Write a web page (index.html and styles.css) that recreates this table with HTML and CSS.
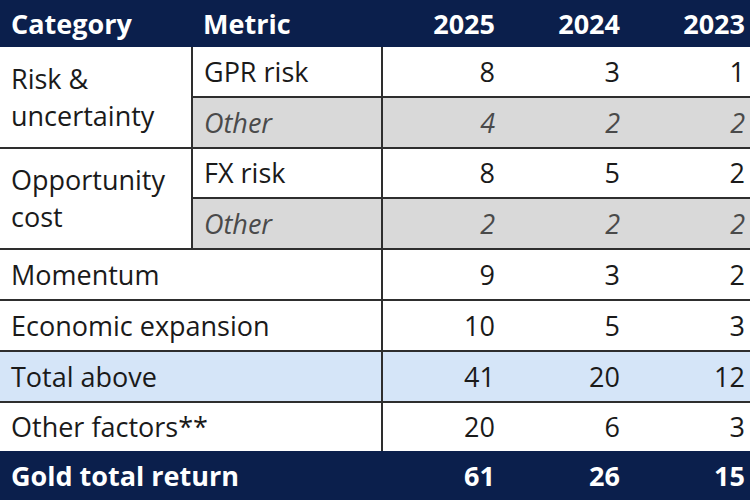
FILE: index.html
```html
<!DOCTYPE html>
<html>
<head>
<meta charset="utf-8">
<link rel="stylesheet" href="styles.css">
</head>
<body>
<table class="tbl">
  <colgroup>
    <col class="c-cat"><col class="c-met"><col class="c-y1"><col class="c-y2"><col class="c-y3">
  </colgroup>
  <thead>
    <tr class="head">
      <th class="txt">Category</th>
      <th class="txt">Metric</th>
      <th class="num">2025</th>
      <th class="num">2024</th>
      <th class="num last">2023</th>
    </tr>
  </thead>
  <tbody>
    <tr>
      <td class="txt cat" rowspan="2">Risk &amp;<br>uncertainty</td>
      <td class="txt met">GPR risk</td>
      <td class="num">8</td><td class="num">3</td><td class="num last">1</td>
    </tr>
    <tr class="grey">
      <td class="txt met">Other</td>
      <td class="num">4</td><td class="num">2</td><td class="num last">2</td>
    </tr>
    <tr>
      <td class="txt cat" rowspan="2">Opportunity<br>cost</td>
      <td class="txt met">FX risk</td>
      <td class="num">8</td><td class="num">5</td><td class="num last">2</td>
    </tr>
    <tr class="grey">
      <td class="txt met">Other</td>
      <td class="num">2</td><td class="num">2</td><td class="num last">2</td>
    </tr>
    <tr>
      <td class="txt wide" colspan="2">Momentum</td>
      <td class="num">9</td><td class="num">3</td><td class="num last">2</td>
    </tr>
    <tr>
      <td class="txt wide" colspan="2">Economic expansion</td>
      <td class="num">10</td><td class="num">5</td><td class="num last">3</td>
    </tr>
    <tr class="blue">
      <td class="txt wide" colspan="2">Total above</td>
      <td class="num">41</td><td class="num">20</td><td class="num last">12</td>
    </tr>
    <tr>
      <td class="txt wide" colspan="2">Other factors**</td>
      <td class="num">20</td><td class="num">6</td><td class="num last">3</td>
    </tr>
    <tr class="foot">
      <td class="txt" colspan="2">Gold total return</td>
      <td class="num">61</td><td class="num">26</td><td class="num last">15</td>
    </tr>
  </tbody>
</table>
</body>
</html>
```

FILE: styles.css
```css
html, body {
  margin: 0;
  padding: 0;
  background: #ffffff;
}
.tbl {
  width: 750px;
  border-collapse: collapse;
  table-layout: fixed;
  font-family: "Open Sans", "DejaVu Sans", sans-serif;
  font-size: 27px;
  color: #1a1a1a;
}
.c-cat { width: 192px; }
.c-met { width: 190px; }
.c-y1 { width: 121px; }
.c-y2 { width: 125px; }
.c-y3 { width: 122px; }

.tbl th, .tbl td {
  padding: 0;
  height: 48.8px;
  white-space: nowrap;
  vertical-align: middle;
  border-top: 2px solid #2e2e2e;
}
.tbl .txt { text-align: left; padding-left: 11px; }
.tbl .num { text-align: right; padding-right: 8px; }
.tbl .num.last { padding-right: 5px; }

.head th {
  background: #0b1f4c;
  color: #ffffff;
  font-weight: 700;
  height: 47px;
  border-top: none;
}
.tbl tbody tr:first-child td { border-top: none; }

.cat {
  line-height: 37px;
  padding-top: 3px;
  border-right: 2px solid #2e2e2e;
}
.met { border-right: 2px solid #2e2e2e; }
.wide { border-right: 2px solid #2e2e2e; }

.grey td {
  background: #d9d9d9;
  font-style: italic;
  color: #4a4a4a;
}
.blue td { background: #d5e5f8; }
.foot td {
  background: #0b1f4c;
  color: #ffffff;
  font-weight: 700;
  border-top: none;
}
```
